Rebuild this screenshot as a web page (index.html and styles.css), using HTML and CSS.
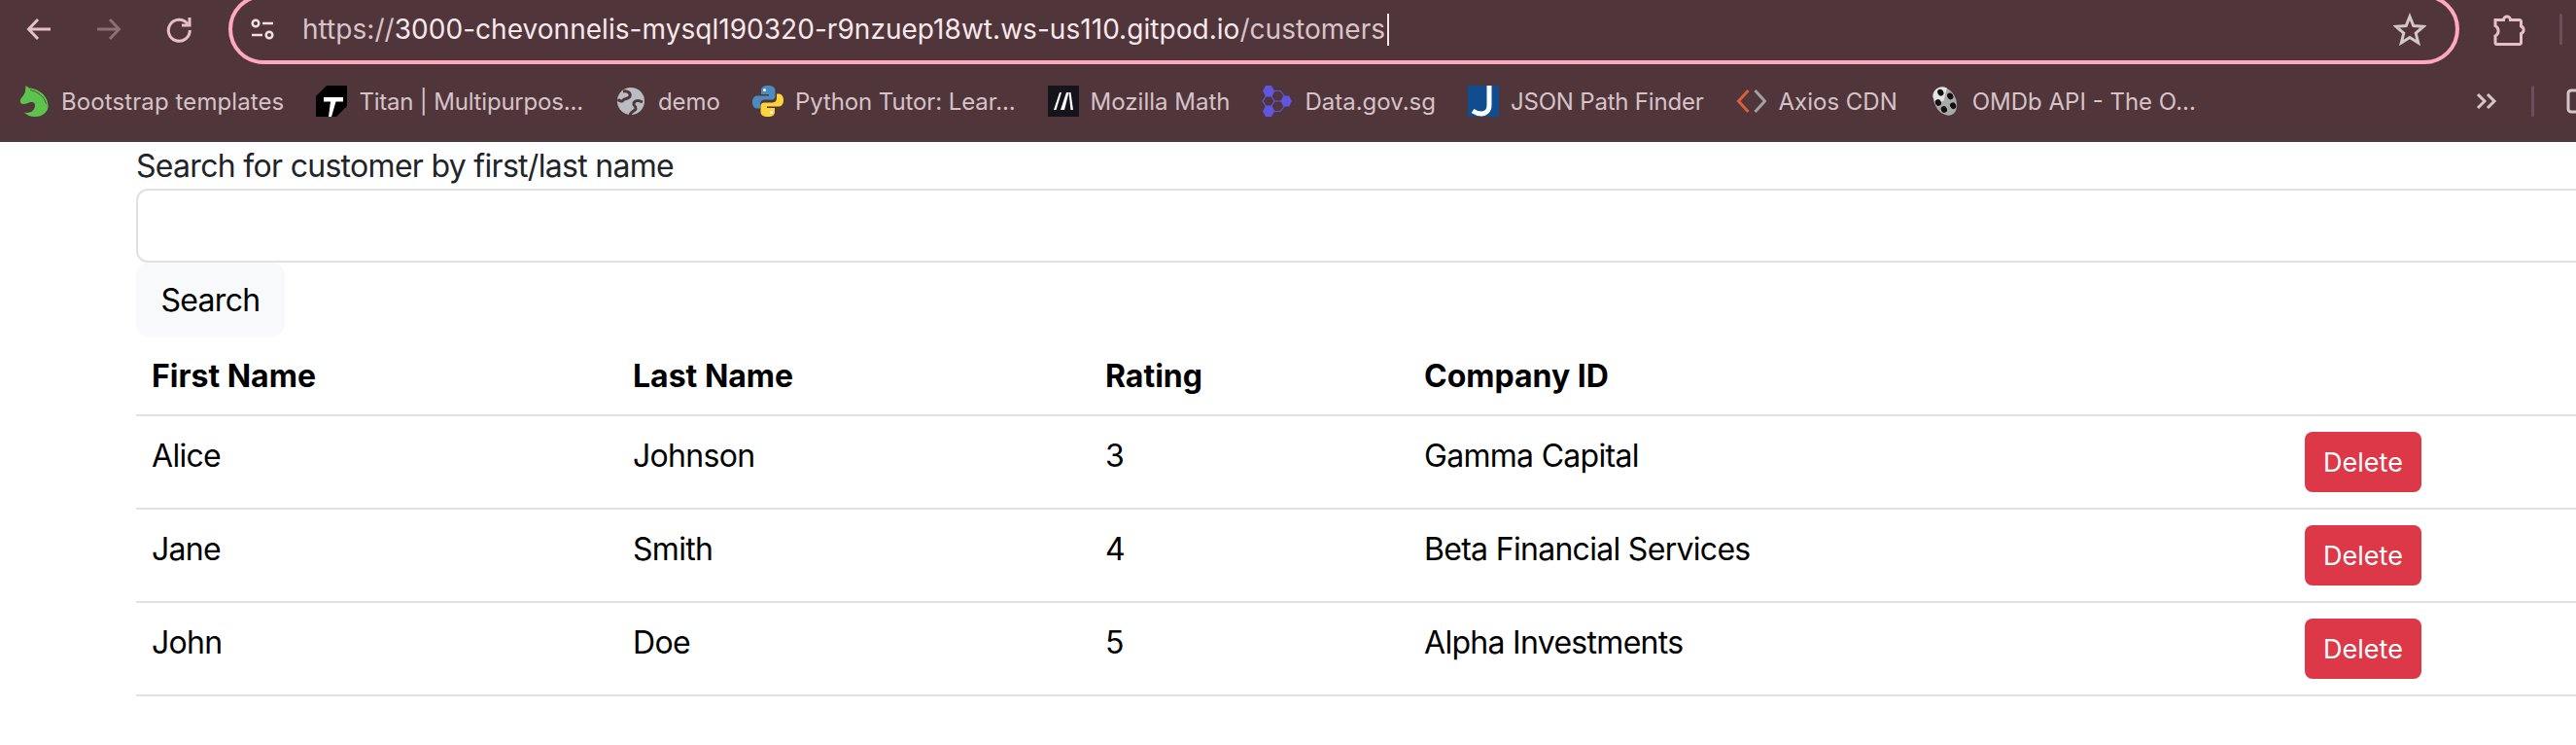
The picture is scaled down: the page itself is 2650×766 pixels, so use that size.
FILE: index.html
```html
<!DOCTYPE html>
<html>
<head>
    <meta charset="UTF-8">
    <meta name="viewport" content="width=device-width, initial-scale=1.0">
    <title>Customers</title>
    <link rel="stylesheet" href="styles.css">
</head>
<body>
    <header class="browser">
        <div class="nav-row">
            <div class="nav-btn">
                <svg width="26" height="26" viewBox="0 0 26 26"><path d="M25 13H3M12 3 2.500 13 12 23" class="line"/></svg>
            </div>
            <div class="nav-btn dim">
                <svg width="26" height="26" viewBox="0 0 26 26"><path d="M1 13H23M14 3 23.500 13 14 23" class="line"/></svg>
            </div>
            <div class="nav-btn">
                <svg width="28" height="28" viewBox="0 0 28 28"><path d="M23 8.500A11 11 0 1 0 25.300 15" class="line"/><path d="M25 2V10H17" class="line"/></svg>
            </div>
            <div class="address">
                <svg class="tune" width="24" height="24" viewBox="0 0 24 24">
                    <circle cx="5" cy="6" r="3.300" class="line thin"/><path d="M12 6H23M1 18H12" class="line thin"/><circle cx="19" cy="18" r="3.300" class="line thin"/>
                </svg>
                <div class="url"><span class="faded">https://</span>3000-chevonnelis-mysql190320-r9nzuep18wt.ws-us110.gitpod.io<span class="faded">/customers</span></div>
                <div class="caret"></div>
                <svg class="star" width="34" height="34" viewBox="0 0 34 34"><path d="M17 4 20.800 13.500 31 14.300 23.200 21 25.700 31 17 25.600 8.300 31 10.800 21 3 14.300 13.200 13.500Z" class="line"/></svg>
            </div>
            <svg class="ext" width="34" height="34" viewBox="0 0 34 34"><path d="M3 7.500H11.500A3.500 3.500 0 0 1 18.500 7.500H28A1.500 1.500 0 0 1 29.500 9V14A4 4 0 0 1 29.500 21.500V31A1.500 1.500 0 0 1 28 32.500H4.500A1.500 1.500 0 0 1 3 31V24A6 6 0 0 0 3 13.500Z" class="line"/></svg>
            <div class="bar-divider"></div>
        </div>

        <nav class="bookmarks">
            <a class="mark wide">
                <svg width="32" height="32" viewBox="0 0 32 32"><path d="M7.500 0 11 2.500C20 3 30.500 10 30.500 21 30.500 27 25 32 17 32 12 32 8 30 6 27.500 12 29 17 26 17 20 17 17.500 15 16.500 12.500 17 10 17.500 7 19.500 4.500 19 2 18.500 1 16 2.500 13.500 4 11 6.500 9 7 6Z" fill="#5cc44e"/><path d="M12 4.500C20 6 27 12 28.500 19" stroke="#50353b" stroke-width="0.800" fill="none"/></svg>
                Bootstrap templates
            </a>
            <a class="mark tight">
                <svg width="32" height="32" viewBox="0 0 32 32"><path d="M0 11 11 0H32V21L21 32H0Z" fill="#000"/><path d="M8 12H28V16.500H20.500L16 32H13L15 16.500H8Z" fill="#fff"/></svg>
                Titan | Multipurpos...
            </a>
            <a class="mark">
                <svg width="32" height="32" viewBox="0 0 32 32"><circle cx="16" cy="16" r="14" fill="#b9bdc2"/><path d="M8 6C13 5 16 8 15 11 14 14 9 13 8 15 7 17 4 16 3 14M28 17C24 15 20 15 19 18 18 21 22 21 21 24 20 26 16 27 15 30" stroke="#50353b" stroke-width="3" fill="none"/></svg>
                demo
            </a>
            <a class="mark snug">
                <svg width="32" height="32" viewBox="0 0 32 32">
                    <path d="M16 0C11 0 9 2 9 5V9H17V10.500H5C2 10.500 0 13 0 17 0 21 2 23.500 5 23.500H8V19C8 16 10 14.500 13 14.500H20C22 14.500 23.500 13 23.500 11V5C23.500 2 21 0 16 0Z" fill="#4b8bbe"/>
                    <path d="M16 32C21 32 23 30 23 27V23H15V21.500H27C30 21.500 32 19 32 15 32 11 30 8.500 27 8.500H25V13C25 16 23 17.500 20 17.500H12C10 17.500 8.500 19 8.500 21V27C8.500 30 11 32 16 32Z" fill="#ffd43b"/>
                    <circle cx="12.500" cy="4.500" r="1.500" fill="#fff"/><circle cx="19.500" cy="27.500" r="1.500" fill="#fff"/>
                </svg>
                Python Tutor: Lear...
            </a>
            <a class="mark">
                <svg width="32" height="32" viewBox="0 0 32 32"><rect width="32" height="32" fill="#15141a"/><path d="M6 25 12 7H14L8.500 25ZM13 25 19 7H21.500L17 25ZM21.500 7H23.500L26 25H23.500Z" fill="#fff"/></svg>
                Mozilla Math
            </a>
            <a class="mark">
                <svg width="32" height="32" viewBox="0 0 32 32">
                    <g fill="#6056e0"><path d="M4 0H10L13 5.500 10 11H4L1 5.500Z"/><path d="M4 21H10L13 26.500 10 32H4L1 26.500Z"/><path d="M23 10.500H28L31 16 28 21.500H23L20 16Z"/></g>
                    <path d="M10 11 13 5.500H19L23 10.500 20 16 23 21.500 19 26.500H13L10 21 13 16 10 11H4L1 16 4 21H10M13 16H20" fill="none" stroke="#6056e0" stroke-width="1.200"/>
                </svg>
                Data.gov.sg
            </a>
            <a class="mark tight">
                <svg width="32" height="32" viewBox="0 0 32 32"><rect width="32" height="32" fill="#0f4d8f"/><path d="M22 0V20C22 26 18 29 14 29 11 29 8 28 5 26" stroke="#fff" stroke-width="5" fill="none"/></svg>
                JSON Path Finder
            </a>
            <a class="mark">
                <svg width="32" height="32" viewBox="0 0 32 32"><path d="M12.500 5 2.500 16 12.500 27" stroke="#d9603b" stroke-width="3" fill="none"/><path d="M19.500 5 29.500 16 19.500 27" stroke="#a3a1a1" stroke-width="3" fill="none"/></svg>
                Axios CDN
            </a>
            <a class="mark">
                <svg width="32" height="32" viewBox="0 0 32 32">
                    <g transform="rotate(-28 16 16)">
                        <ellipse cx="16" cy="16" rx="11" ry="15.500" fill="#a9a9a9"/><path d="M7 6C10 -1 20 -1 24 5L15 15 6 14Z" fill="#e4e4e4"/>
                        <g fill="#111"><ellipse cx="16" cy="6" rx="3" ry="3.500"/><ellipse cx="9" cy="14" rx="3" ry="3.500"/><ellipse cx="23" cy="14" rx="3" ry="3.500"/><ellipse cx="11" cy="23" rx="3" ry="3.500"/><ellipse cx="21" cy="24" rx="3" ry="3.500"/></g>
                    </g>
                </svg>
                OMDb API - The O...
            </a>
            <svg class="more" width="22" height="18" viewBox="0 0 22 18"><path d="M2 2 9 9 2 16M12 2 19 9 12 16" class="line"/></svg>
            <div class="bar-divider small"></div>
            <svg class="folder" width="24" height="26" viewBox="0 0 24 26"><path d="M24 2H5A3 3 0 0 0 2 5V21A3 3 0 0 0 5 24H24" class="line"/></svg>
        </nav>
    </header>

    <main class="content">
        <label class="search-label" for="terms">Search for customer by first/last name</label>
        <input class="search-input" id="terms" type="text">
        <button class="btn btn-light">Search</button>

        <table class="customers">
            <colgroup>
                <col class="col-first"><col class="col-last"><col class="col-rating"><col class="col-company"><col class="col-action">
            </colgroup>
            <thead>
                <tr><th>First Name</th><th>Last Name</th><th>Rating</th><th>Company ID</th><th></th></tr>
            </thead>
            <tbody>
                <tr><td>Alice</td><td>Johnson</td><td>3</td><td>Gamma Capital</td><td class="action"><button class="btn btn-danger">Delete</button></td></tr>
                <tr><td>Jane</td><td>Smith</td><td>4</td><td>Beta Financial Services</td><td class="action"><button class="btn btn-danger">Delete</button></td></tr>
                <tr><td>John</td><td>Doe</td><td>5</td><td>Alpha Investments</td><td class="action"><button class="btn btn-danger">Delete</button></td></tr>
            </tbody>
        </table>
    </main>
</body>
</html>
```

FILE: styles.css
```css
html, body {
    margin: 0;
    overflow: hidden;
    background: white;
    font-family: "Inter", "Liberation Sans", sans-serif;
}

/* browser chrome */
.browser {
    background: #50353b;
    height: 144px;
    border-bottom: 2px solid #4a3b3e;
}
.nav-row {
    display: flex;
    align-items: center;
    height: 60px;
    padding-left: 4px;
    margin-bottom: 6px;
}
.nav-btn {
    width: 72px;
    display: flex;
    justify-content: center;
    color: #e6bfc8;
}
.nav-btn.dim { color: #8a6f74; }
.line {
    fill: none;
    stroke: currentColor;
    stroke-width: 3;
}
.line.thin { stroke-width: 2.500; }
.address {
    box-sizing: border-box;
    width: 2295px;
    height: 72px;
    margin-left: 15px;
    padding: 0 30px 0 19px;
    flex-shrink: 0;
    display: flex;
    align-items: center;
    border: 4px solid #ffa9bd;
    border-radius: 36px;
    color: #f3dfe3;
}
.tune { flex-shrink: 0; }
.url {
    margin-left: 29px;
    font-size: 28px;
    letter-spacing: 0.04px;
    color: #f7e8eb;
    white-space: nowrap;
}
.url .faded { color: #d8c4c9; }
.caret {
    width: 2px;
    height: 33px;
    margin-left: 2px;
    background: #f7e8eb;
}
.star {
    margin-left: auto;
    color: #d6c6c9;
}
.ext {
    margin-left: 34px;
    flex-shrink: 0;
    color: #e6bfc8;
}
.bar-divider {
    width: 3px;
    height: 32px;
    margin-left: 35px;
    border-radius: 2px;
    background: #69505a;
    flex-shrink: 0;
}

.bookmarks {
    display: flex;
    align-items: center;
    gap: 33px;
    padding: 22px 0 24px 19px;
    height: 32px;
}
.mark {
    display: flex;
    align-items: center;
    gap: 12px;
    font-size: 24px;
    color: #d6c3c7;
    white-space: nowrap;
}
.mark.wide { letter-spacing: 0.1px; }
.mark.snug { letter-spacing: -0.1px; }
.mark.tight { letter-spacing: -0.2px; }
.mark svg { flex-shrink: 0; }
.more {
    margin-left: 255px;
    flex-shrink: 0;
    color: #d6c6c9;
}
.bar-divider.small {
    margin-left: 2px;
}
.folder {
    flex-shrink: 0;
    color: #d6c6c9;
}

/* page */
.content {
    width: 2800px;
    padding-left: 140px;
    font-size: 32px;
    letter-spacing: -0.7px;
    color: #212529;
}
.search-label {
    display: block;
    height: 46px;
    padding-top: 2px;
    line-height: 46px;
}
.search-input {
    display: block;
    box-sizing: border-box;
    width: 100%;
    height: 76px;
    border: 2px solid #dee2e6;
    border-radius: 12px;
}
.btn {
    display: block;
    border: none;
    font-family: inherit;
}
.btn-light {
    box-sizing: border-box;
    width: 153px;
    height: 76px;
    background: #f8f9fa;
    border-radius: 13px;
    font-size: 32px;
    letter-spacing: -0.7px;
    color: black;
}
.btn-danger {
    width: 120px;
    height: 62px;
    padding: 0;
    background: #dc3848;
    border-radius: 8px;
    font-size: 27px;
    color: white;
}

.customers {
    width: 100%;
    table-layout: fixed;
    border-collapse: collapse;
    color: black;
}
.col-first { width: 495px; }
.col-last { width: 486px; }
.col-rating { width: 328px; }
.col-company { width: 906px; }
.customers th, .customers td {
    padding: 17px 16px 15px;
    text-align: left;
    vertical-align: top;
    line-height: 48px;
    border-bottom: 2px solid #dee2e6;
}
.customers th {
    font-weight: 700;
    letter-spacing: 0;
}
.customers td.action {
    padding: 16px;
}
```
